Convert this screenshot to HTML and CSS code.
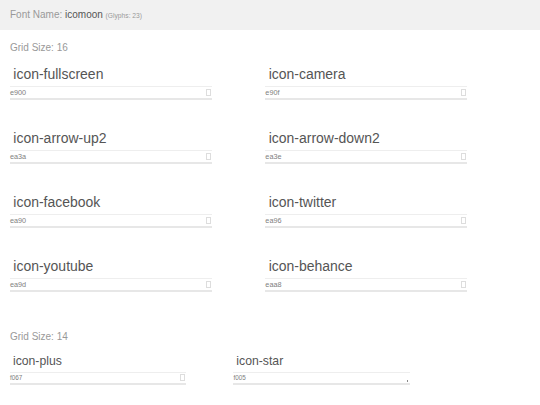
FILE: index.html
```html
<!DOCTYPE html>
<html lang="en">

<head>
    <meta charset="UTF-8">
    <title>IcoMoon Demo</title>
    <link rel="stylesheet" href="styles.css">
</head>

<body>

    <div class="header">
        <span class="muted">Font Name:</span> icomoon <small class="muted">(Glyphs:&nbsp;23)</small>
    </div>

    <div class="section">
        <div class="grid-label">Grid Size: 16</div>
        <div class="glyphs size16">
            <div class="glyph">
                <div class="glyph-name">icon-fullscreen</div>
                <div class="field"><span class="code">e900</span><span class="tofu"></span></div>
            </div>
            <div class="glyph">
                <div class="glyph-name">icon-camera</div>
                <div class="field"><span class="code">e90f</span><span class="tofu"></span></div>
            </div>
            <div class="glyph">
                <div class="glyph-name">icon-arrow-up2</div>
                <div class="field"><span class="code">ea3a</span><span class="tofu"></span></div>
            </div>
            <div class="glyph">
                <div class="glyph-name">icon-arrow-down2</div>
                <div class="field"><span class="code">ea3e</span><span class="tofu"></span></div>
            </div>
            <div class="glyph">
                <div class="glyph-name">icon-facebook</div>
                <div class="field"><span class="code">ea90</span><span class="tofu"></span></div>
            </div>
            <div class="glyph">
                <div class="glyph-name">icon-twitter</div>
                <div class="field"><span class="code">ea96</span><span class="tofu"></span></div>
            </div>
            <div class="glyph">
                <div class="glyph-name">icon-youtube</div>
                <div class="field"><span class="code">ea9d</span><span class="tofu"></span></div>
            </div>
            <div class="glyph">
                <div class="glyph-name">icon-behance</div>
                <div class="field"><span class="code">eaa8</span><span class="tofu"></span></div>
            </div>
        </div>
    </div>

    <div class="section">
        <div class="grid-label">Grid Size: 14</div>
        <div class="glyphs size14">
            <div class="glyph">
                <div class="glyph-name">icon-plus</div>
                <div class="field"><span class="code">f067</span><span class="tofu"></span></div>
            </div>
            <div class="glyph">
                <div class="glyph-name">icon-star</div>
                <div class="field"><span class="code">f005</span><span class="dot"></span></div>
            </div>
        </div>
    </div>

</body>

</html>
```

FILE: styles.css
```css
body {
    margin: 0;
    padding: 0;
    font-family: "Liberation Sans", Arial, sans-serif;
    color: #555;
    background: #fff;
}

.header {
    background: #f1f1f1;
    height: 30px;
    line-height: 30px;
    padding-left: 10px;
    font-size: 10px;
}

.header small {
    font-size: 0.67em;
}

.muted {
    color: #999;
}

.section {
    padding-left: 10px;
}

.grid-label {
    font-size: 10px;
    line-height: 15px;
    color: #999;
    margin: 10px 0 9px;
}

.section + .section .grid-label {
    margin-top: 9px;
}

.glyphs {
    display: grid;
    grid-template-columns: 15em 15em;
    column-gap: 4em;
}

.size16 {
    font-size: 13.44px;
}

.size14 {
    font-size: 11.76px;
}

.glyph {
    padding-bottom: 2.08em;
}

.glyph-name {
    font-size: 1.04em;
    line-height: 1.44em;
    padding-left: 0.24em;
    margin-bottom: 0.14em;
    color: #555;
}

.field {
    display: flex;
    justify-content: space-between;
    align-items: center;
    box-sizing: border-box;
    height: 1.04em;
    border-top: 1px solid #eee;
    border-bottom: 2px solid #e7e7e7;
}

.code {
    font-size: 0.54em;
    color: #808080;
}

.tofu {
    width: 3px;
    height: 5px;
    border: 1px solid #ddd;
    margin-right: 1px;
}

.dot {
    width: 1px;
    height: 2px;
    background: #888;
    margin-right: 2px;
    align-self: flex-end;
    margin-bottom: 1px;
}
```
